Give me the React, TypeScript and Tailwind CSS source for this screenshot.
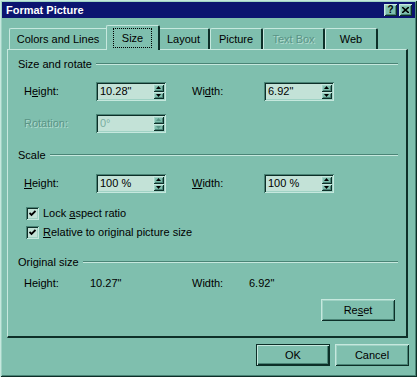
const raised =
  "shadow-[inset_1px_1px_0_#c6e8de,inset_-1px_-1px_0_#0d2f28,inset_2px_2px_0_#9fd2c4,inset_-2px_-2px_0_#4a8476]";
const sunken =
  "shadow-[inset_1px_1px_0_#4a8476,inset_-1px_-1px_0_#c6e8de,inset_2px_2px_0_#0d2f28,inset_-2px_-2px_0_#9fd2c4]";

function Arrow({ up, disabled }: { up?: boolean; disabled?: boolean }) {
  return (
    <svg width="5" height="3" viewBox="0 0 5 3">
      <polygon
        points={up ? "2.5,0 5,3 0,3" : "0,0 5,0 2.5,3"}
        fill={disabled ? "#5a9486" : "#000"}
      />
    </svg>
  );
}

function Spin({ value, disabled }: { value: string; disabled?: boolean }) {
  return (
    <div
      className={`flex h-[19px] w-[70px] items-stretch bg-[#c3e2d7] p-[2px] ${sunken}`}
    >
      <div
        className={`flex flex-1 items-center pl-[2px] leading-none ${
          disabled ? "text-[#7aaea1]" : "text-black"
        }`}
      >
        {value}
      </div>
      <div className="flex w-[11px] flex-col">
        <div className={`flex flex-1 items-center justify-center bg-[#7fbfae] ${raised}`}>
          <Arrow up disabled={disabled} />
        </div>
        <div className={`flex flex-1 items-center justify-center bg-[#7fbfae] ${raised}`}>
          <Arrow disabled={disabled} />
        </div>
      </div>
    </div>
  );
}

function GroupLabel({ text }: { text: string }) {
  return (
    <div className="flex h-[14px] items-center pl-[10px] pr-[8px]">
      <span className="pr-[4px]">{text}</span>
      <div className="flex-1 border-t border-b border-t-[#4a8476] border-b-[#c6e8de]" />
    </div>
  );
}

function Check({ children }: { children: React.ReactNode }) {
  return (
    <div className="flex h-[14px] items-center pl-[18px]">
      <div
        className={`flex h-[13px] w-[13px] items-center justify-center bg-[#c3e2d7] ${sunken}`}
      >
        <svg width="7" height="7" viewBox="0 0 7 7">
          <polyline points="0.5,3 2.5,5 6.5,1" fill="none" stroke="#000" strokeWidth="1.8" />
        </svg>
      </div>
      <span className="pl-[4px]">{children}</span>
    </div>
  );
}

function Button({ label, def }: { label: React.ReactNode; def?: boolean }) {
  return (
    <div
      className={`flex h-[22px] w-[74px] items-center justify-center bg-[#7fbfae] ${
        def
          ? "shadow-[inset_0_0_0_1px_#0d2f28,inset_2px_2px_0_#c6e8de,inset_-2px_-2px_0_#0d2f28,inset_-3px_-3px_0_#4a8476]"
          : raised
      }`}
    >
      {label}
    </div>
  );
}

const tabs = ["Colors and Lines", "Size", "Layout", "Picture", "Text Box", "Web"];
const tabW = [99, 54, 52, 53, 62, 53];

export default function App() {
  return (
    <div
      className={`h-[377px] w-[417px] overflow-hidden bg-[#7fbfae] p-[2px] text-[11px] text-black ${raised}`}
      style={{ fontFamily: "'Liberation Sans', Arial, sans-serif" }}
    >
      {/* title bar */}
      <div className="flex h-[16px] items-center justify-between bg-[#0c1470] pl-[4px] pr-[3px]">
        <span className="font-bold text-white">Format Picture</span>
        <div className="flex gap-[2px]">
          <div className={`flex h-[12px] w-[13px] items-center justify-center bg-[#7fbfae] text-[10px] font-bold leading-none ${raised}`}>
            ?
          </div>
          <div className={`flex h-[12px] w-[13px] items-center justify-center bg-[#7fbfae] ${raised}`}>
            <svg width="7" height="6" viewBox="0 0 7 6">
              <path d="M0 0L7 6M7 0L0 6" stroke="#000" strokeWidth="1.6" />
            </svg>
          </div>
        </div>
      </div>

      {/* tabs */}
      <div className="mt-[6px] flex h-[25px] items-end pl-[7px]">
        {tabs.map((t, i) => {
          const sel = t === "Size";
          const dis = t === "Text Box";
          return (
            <div
              key={t}
              style={{ width: tabW[i] }}
              className={`relative flex items-center justify-center rounded-t-[2px] border-l border-t border-r-2 border-l-[#c6e8de] border-t-[#c6e8de] border-r-[#0d2f28] bg-[#7fbfae] ${
                sel ? "z-10 -mb-[1px] -ml-[2px] -mr-[2px] h-[25px]" : "h-[21px]"
              } ${dis ? "text-[#5a9486] [text-shadow:1px_1px_0_#b4ddd1]" : ""}`}
            >
              {sel ? (
                <span className="border border-dotted border-black px-[8px] py-[1px]">{t}</span>
              ) : (
                t
              )}
            </div>
          );
        })}
      </div>

      {/* panel */}
      <div className="ml-[5px] h-[289px] w-[401px] border-l border-t border-r-2 border-b-2 border-l-[#c6e8de] border-t-[#c6e8de] border-r-[#0d2f28] border-b-[#0d2f28] pt-[7px]">
        <GroupLabel text="Size and rotate" />
        <div className="mt-[11px] flex items-center pl-[16px]">
          <span className="w-[72px]">
            H<u>e</u>ight:
          </span>
          <Spin value={'10.28"'} />
          <span className="ml-[26px] w-[72px]">
            Wi<u>d</u>th:
          </span>
          <Spin value={'6.92"'} />
        </div>
        <div className="mt-[13px] flex items-center pl-[16px]">
          <span className="w-[72px] text-[#5a9486] [text-shadow:1px_1px_0_#b4ddd1]">Rotation:</span>
          <Spin value="0°" disabled />
        </div>

        <div className="mt-[15px]">
          <GroupLabel text="Scale" />
        </div>
        <div className="mt-[12px] flex items-center pl-[16px]">
          <span className="w-[72px]">
            <u>H</u>eight:
          </span>
          <Spin value="100 %" />
          <span className="ml-[26px] w-[72px]">
            <u>W</u>idth:
          </span>
          <Spin value="100 %" />
        </div>
        <div className="mt-[13px]">
          <Check>
            Lock <u>a</u>spect ratio
          </Check>
        </div>
        <div className="mt-[5px]">
          <Check>
            <u>R</u>elative to original picture size
          </Check>
        </div>

        <div className="mt-[16px]">
          <GroupLabel text="Original size" />
        </div>
        <div className="mt-[7px] flex h-[14px] items-center pl-[16px]">
          <span className="w-[66px]">Height:</span>
          <span className="w-[102px]">10.27"</span>
          <span className="w-[57px]">Width:</span>
          <span>6.92"</span>
        </div>
        <div className="mt-[9px] flex justify-end pr-[11px]">
          <Button
            label={
              <span>
                Re<u>s</u>et
              </span>
            }
          />
        </div>
      </div>

      {/* dialog buttons */}
      <div className="mt-[6px] flex justify-end gap-[5px] pr-[6px]">
        <Button label="OK" def />
        <Button label="Cancel" />
      </div>
    </div>
  );
}
